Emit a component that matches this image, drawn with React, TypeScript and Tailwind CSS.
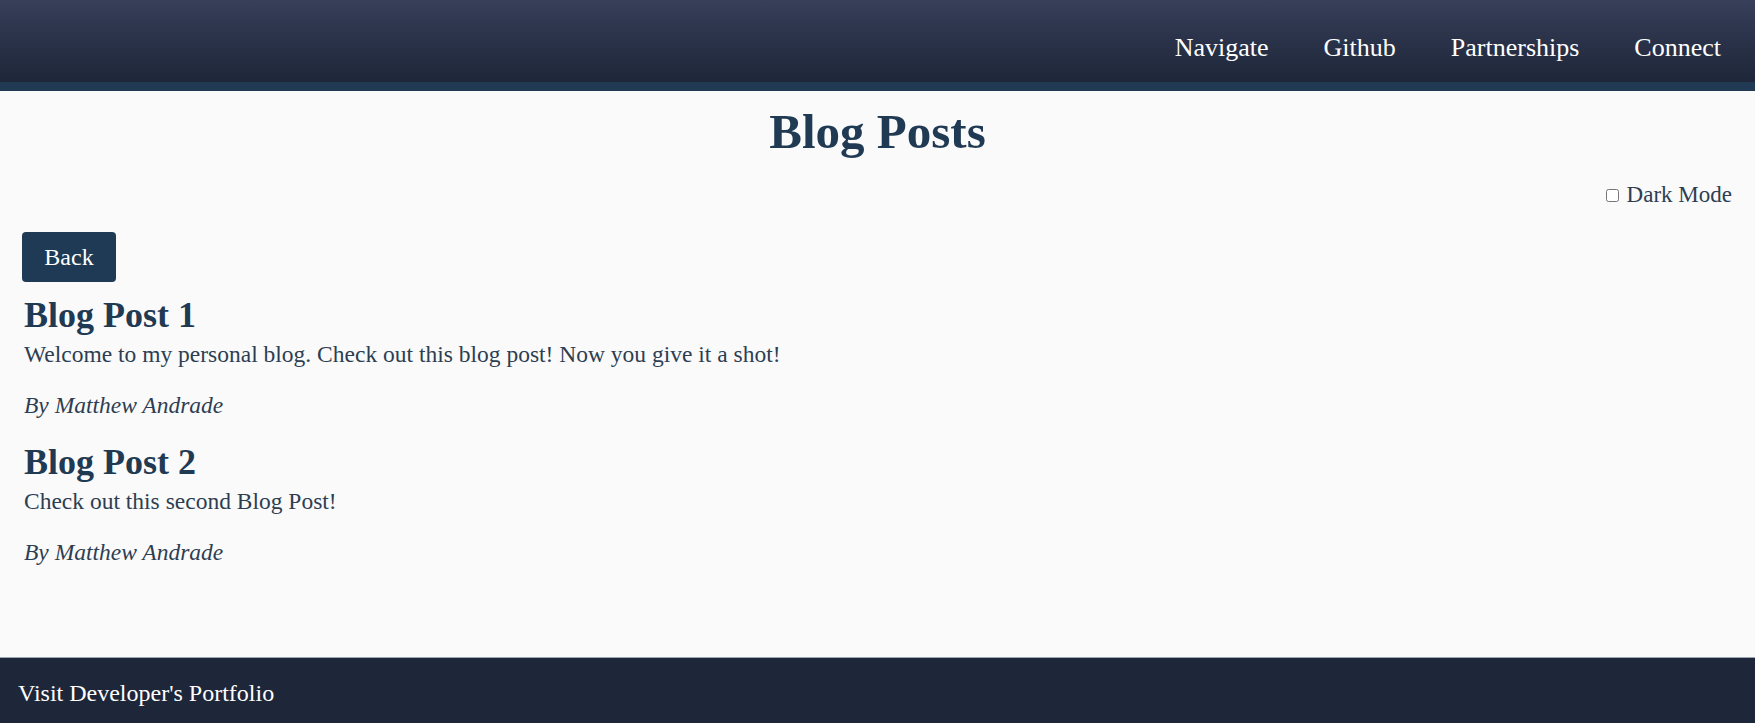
const navLinks = ["Navigate", "Github", "Partnerships", "Connect"];

const posts = [
  {
    title: "Blog Post 1",
    body: "Welcome to my personal blog. Check out this blog post! Now you give it a shot!",
    author: "Matthew Andrade",
  },
  {
    title: "Blog Post 2",
    body: "Check out this second Blog Post!",
    author: "Matthew Andrade",
  },
];

const App = () => {
  return (
    <div className="min-h-screen flex flex-col bg-[#fafafa] font-['Liberation_Serif',serif] text-[#1f3a52]">
      <header className="h-[91px] bg-gradient-to-b from-[#373f5a] to-[#1e2639] border-b-[9px] border-[#1f3a52] flex items-center justify-end pr-[34px] pt-[13px]">
        <nav className="flex items-center gap-[55px] text-[26px] text-white">
          {navLinks.map((link) => (
            <a key={link} href="#" className="leading-none">
              {link}
            </a>
          ))}
        </nav>
      </header>

      <main className="flex-1 flex flex-col">
        <h1 className="mt-[15px] text-center text-[49px] leading-[52px] font-bold">Blog Posts</h1>

        <div className="mt-[25px] flex justify-end pr-[23px]">
          <label className="flex items-center gap-[8px] text-[23px] leading-[24px] text-[#2d3e52]">
            <input type="checkbox" className="w-[13px] h-[13px]" />
            Dark Mode
          </label>
        </div>

        <div className="mt-[25px] px-[22px]">
          <button className="h-[50px] w-[94px] rounded-[4px] bg-[#1f3a55] text-white text-[24px]">Back</button>
        </div>

        <div className="px-[24px]">
          {posts.map((post, i) => (
            <article key={post.title} className={i === 0 ? "mt-[15px]" : "mt-[25px]"}>
              <h2 className="text-[36px] leading-[36px] font-bold">{post.title}</h2>
              <p className="mt-[7px] text-[23.5px] leading-[28px] text-[#2d3e52]">{post.body}</p>
              <p className="mt-[23px] text-[23.5px] leading-[28px] italic text-[#2d3e52]">By {post.author}</p>
            </article>
          ))}
        </div>
      </main>

      <footer className="h-[66px] bg-[#1e2639] border-t border-[#9aa6b2] flex items-center px-[18px] pt-[5px]">
        <a href="#" className="text-white text-[24px]">Visit Developer's Portfolio</a>
      </footer>
    </div>
  );
};

export default App;
